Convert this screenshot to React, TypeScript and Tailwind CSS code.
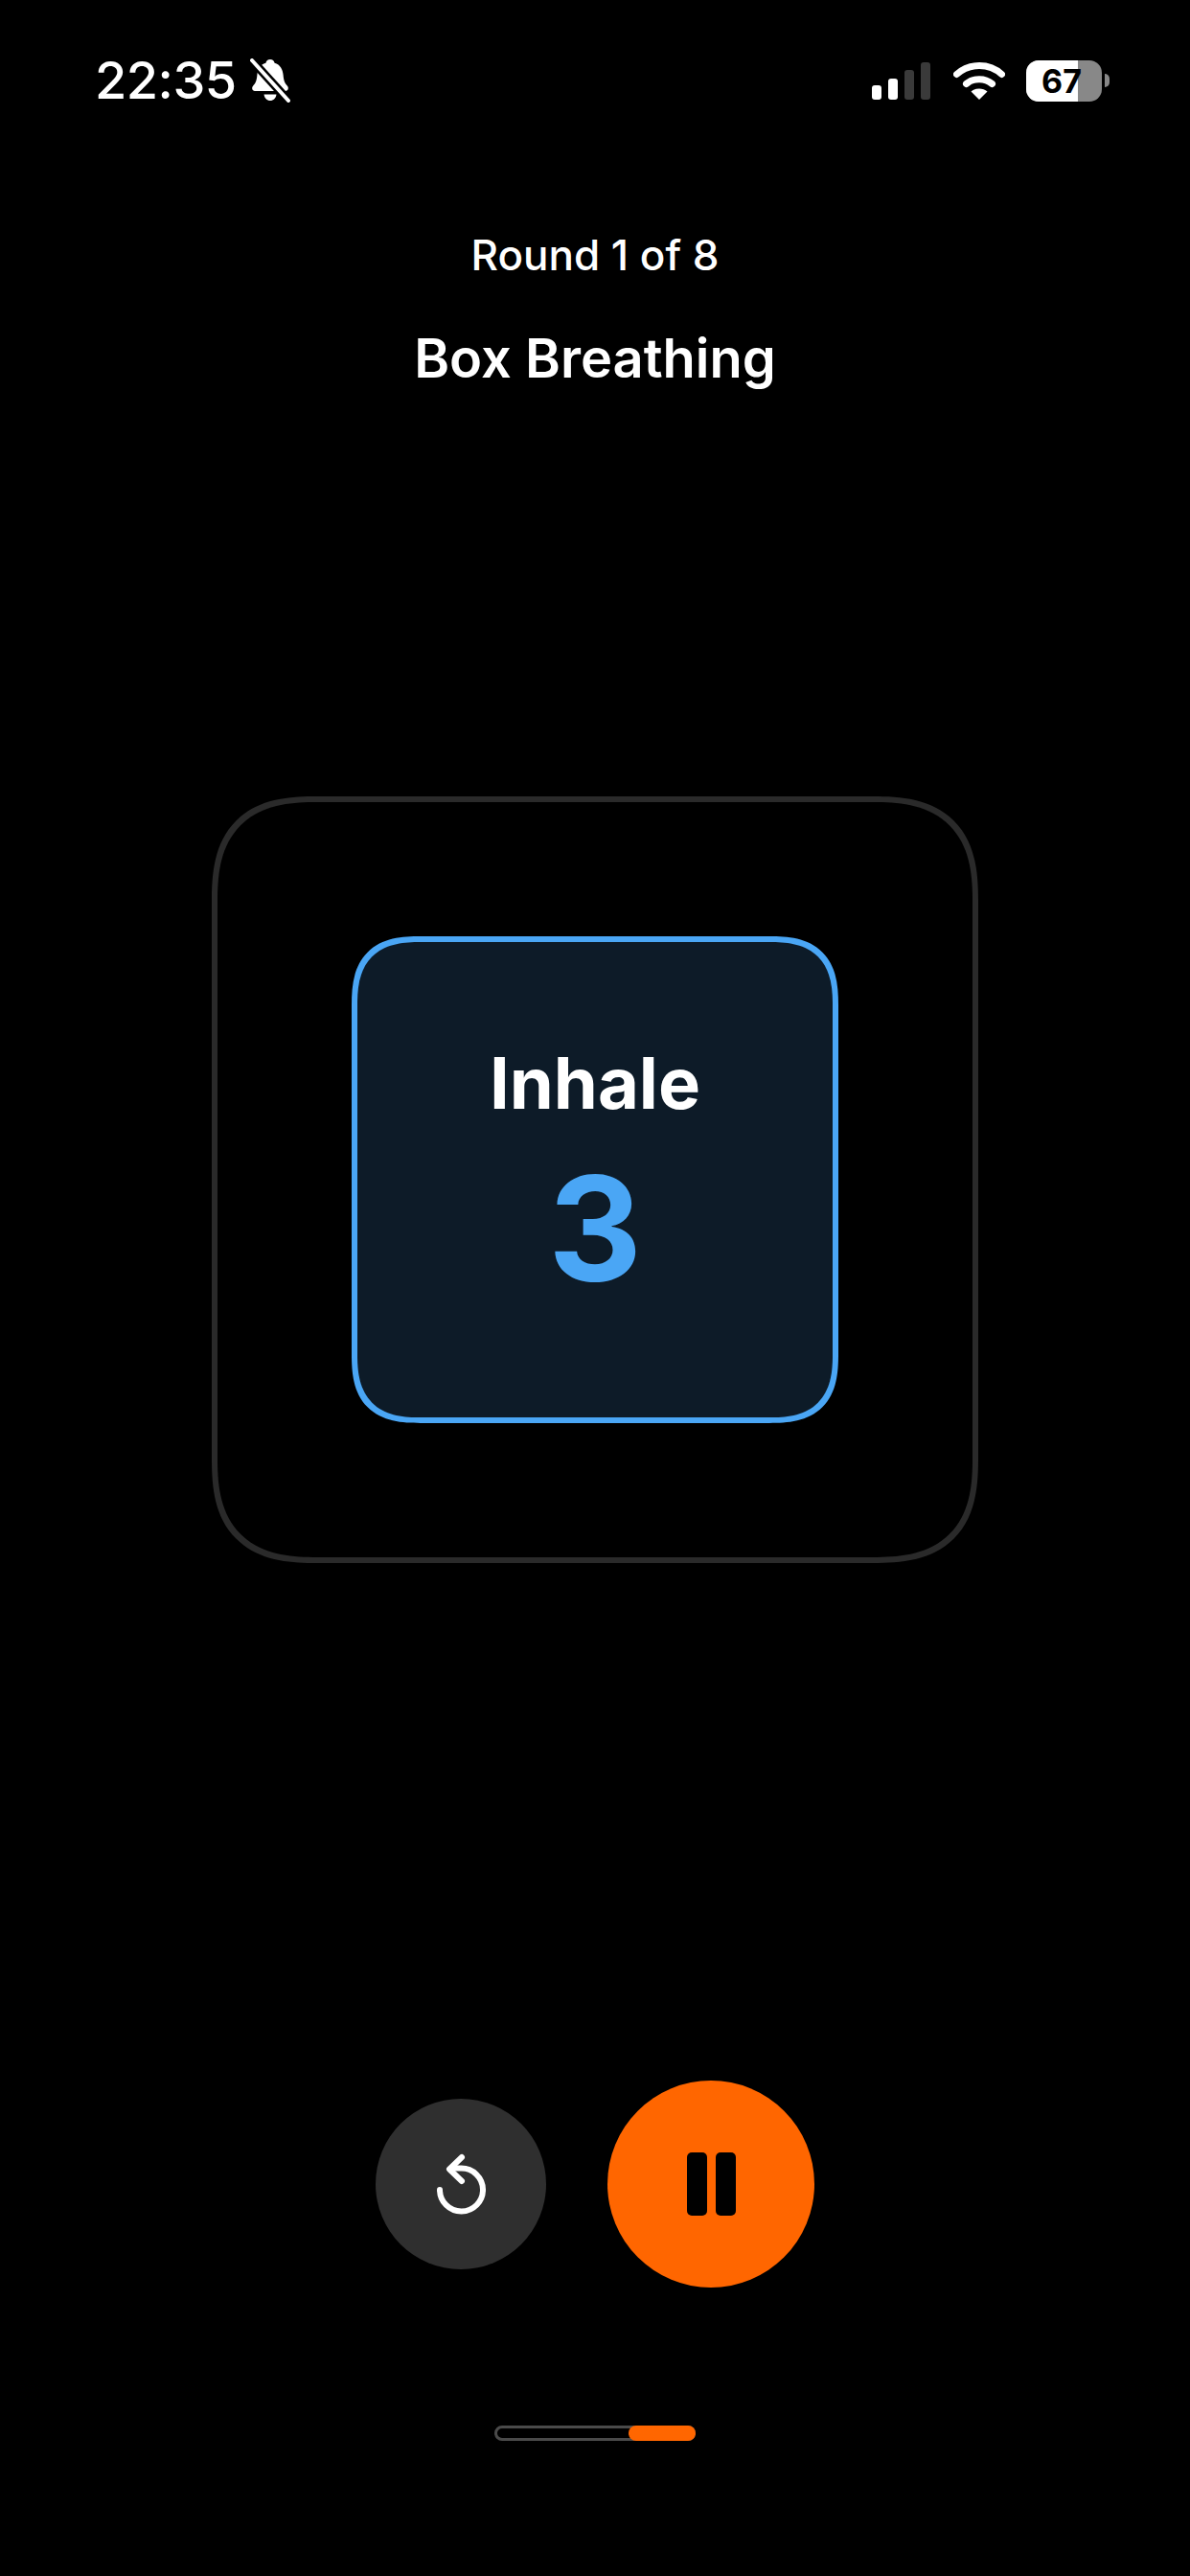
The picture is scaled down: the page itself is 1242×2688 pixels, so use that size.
const inter = "font-['Inter',sans-serif]";

function BellSlash() {
  return (
    <svg width="42" height="46" viewBox="0 0 42 46" className="ml-[14px]">
      <path
        d="M21 1c2.500 0 4.200 1.700 4.600 3.800 6 1.800 8.400 6.500 9 12.500.500 5.500 1.500 8.500 4.400 11.500 1.500 1.600 1 5.200-2 5.200H5c-3 0-3.500-3.600-2-5.200 2.900-3 3.900-6 4.400-11.500.600-6 3-10.700 9-12.500C16.800 2.700 18.500 1 21 1z"
        fill="white"
      />
      <path d="M14.500 37.500h13c-.500 3.900-3.200 6.500-6.500 6.500s-6-2.600-6.500-6.500z" fill="white" />
      <path d="M1 1l40 44" stroke="black" strokeWidth="9" />
      <path d="M2 2l38 42" stroke="white" strokeWidth="4" strokeLinecap="round" />
    </svg>
  );
}

function Wifi() {
  return (
    <svg width="54" height="40" viewBox="0 0 54 40">
      <path d="M3.500 13.500C16.500 1.500 37.500 1.500 50.500 13.500" fill="none" stroke="white" strokeWidth="7" strokeLinecap="round" />
      <path d="M13.500 23.500C21 17 33 17 40.500 23.500" fill="none" stroke="white" strokeWidth="7" strokeLinecap="round" />
      <path d="M18.500 31.500C23 27.500 31 27.500 35.500 31.500L27 40z" fill="white" />
    </svg>
  );
}

function Signal() {
  return (
    <div className="flex items-end gap-[7px] h-[39px]">
      <div className="w-[10px] h-[15px] rounded-[3px] bg-white" />
      <div className="w-[10px] h-[22px] rounded-[3px] bg-white" />
      <div className="w-[10px] h-[31px] rounded-[3px] bg-[#3a3a3a]" />
      <div className="w-[10px] h-[39px] rounded-[3px] bg-[#3a3a3a]" />
    </div>
  );
}

function Battery() {
  return (
    <div className="flex items-center">
      <div className={`relative w-[79px] h-[43px] rounded-[13px] overflow-hidden bg-[#888888] ${inter}`}>
        <div className="absolute inset-y-0 left-0 w-[54px] bg-white" />
        <span className="absolute inset-0 flex items-center justify-center text-[34px] font-bold text-black pr-[5px]">
          67
        </span>
      </div>
      <div className="ml-[3px] w-[5px] h-[14px] rounded-r-full bg-[#888888]" />
    </div>
  );
}

function ResetIcon() {
  return (
    <svg width="60" height="70" viewBox="0 0 60 70" fill="none" stroke="white" strokeWidth="6" strokeLinecap="round" strokeLinejoin="round">
      <path d="M8 41A22.500 22.500 0 1 0 30 18.500H24" />
      <path d="M31 7L18 19.500L31 32" />
    </svg>
  );
}

export default function App() {
  return (
    <div className={`flex flex-col items-center w-full h-[2688px] bg-black text-white ${inter}`}>
      <div className="flex items-center justify-between w-full h-[46px] mt-[61px] pl-[99px] pr-[84px]">
        <div className="flex items-center">
          <span className="text-[54px] leading-none font-medium tracking-[-0.5px]">22:35</span>
          <BellSlash />
        </div>
        <div className="flex items-center">
          <Signal />
          <div className="ml-[24px]">
            <Wifi />
          </div>
          <div className="ml-[22px]">
            <Battery />
          </div>
        </div>
      </div>

      <p className="mt-[133px] text-[44px] leading-[52px] font-medium">Round 1 of 8</p>
      <h1 className="mt-[50px] text-[56px] leading-[64px] font-semibold">Box Breathing</h1>

      <div className="flex items-center justify-center mt-[425px] w-[800px] h-[800px] rounded-[110px] [corner-shape:superellipse(1.4)] border-[6px] border-[#2a2a2a]">
        <div className="flex flex-col items-center w-[508px] h-[508px] rounded-[72px] [corner-shape:superellipse(1.4)] border-[6px] border-[#4aa6f5] bg-[#0d1b28]">
          <p className="mt-[102px] text-[74px] leading-[90px] font-bold">Inhale</p>
          <p className="mt-[17px] text-[152px] leading-[180px] font-bold text-[#4aa6f5]">3</p>
        </div>
      </div>

      <div className="flex items-center gap-[64px] mt-[540px]">
        <button className="flex items-center justify-center w-[178px] h-[178px] rounded-full bg-[#2f2f2f]">
          <ResetIcon />
        </button>
        <button className="flex items-center justify-center gap-[9px] w-[216px] h-[216px] rounded-full bg-[#ff6600]">
          <span className="w-[21px] h-[66px] rounded-[5px] bg-black" />
          <span className="w-[21px] h-[66px] rounded-[5px] bg-black" />
        </button>
      </div>

      <div className="flex justify-end mt-[144px] w-[210px] h-[16px] rounded-full border-[3px] border-[#4a4a4a]">
        <div className="w-[70px] h-[16px] -mt-[3px] -mr-[3px] shrink-0 rounded-full bg-[#ff6600]" />
      </div>
    </div>
  );
}
